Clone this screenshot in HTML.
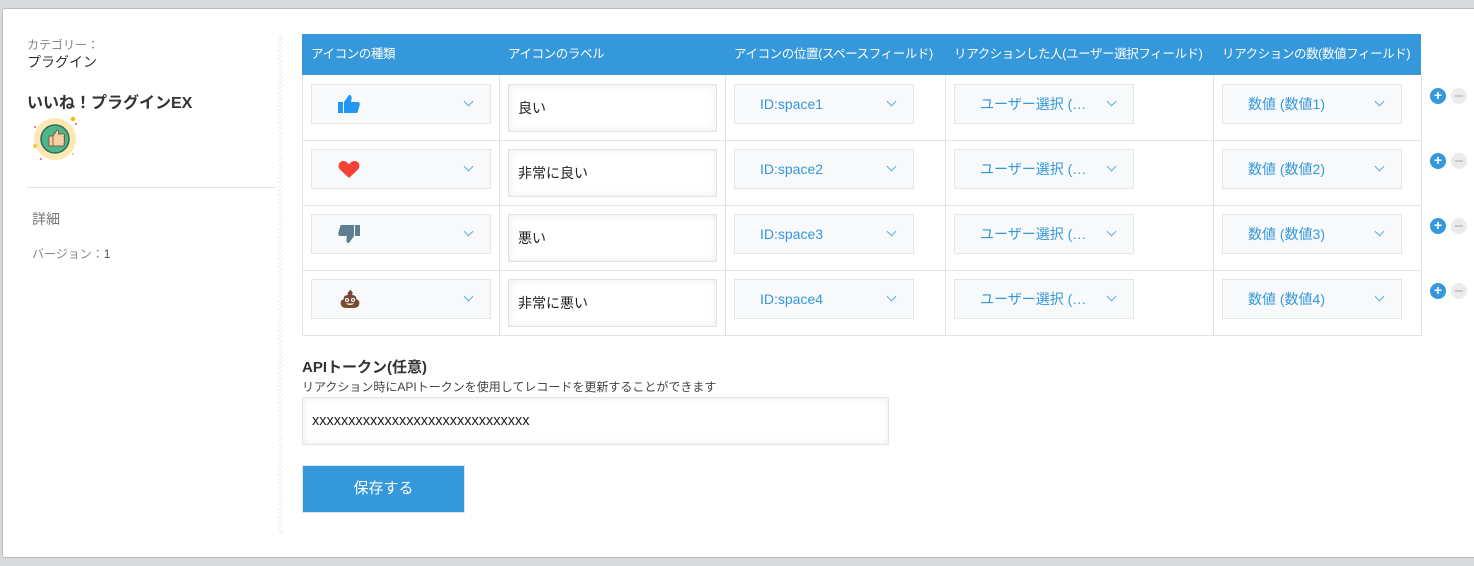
<!DOCTYPE html>
<html><head><meta charset="utf-8"><style>
*{box-sizing:border-box;margin:0;padding:0}
body{width:1474px;height:566px;background:#d9dadb;font-family:"Liberation Sans","Noto Sans CJK JP",sans-serif;position:relative;overflow:hidden}
.card{position:absolute;left:2px;top:8px;width:1480px;height:550px;background:#fff;border:1px solid #bbb;border-right:none;border-radius:3px}
.a{position:absolute}
.th{position:absolute;top:34px;height:41px;background:#3598db;color:#fff;font-size:12.5px;letter-spacing:-0.4px;line-height:41px;padding-left:9px;white-space:nowrap;overflow:hidden}
.vl{position:absolute;width:1px;background:#e3e3e3}
.hl{position:absolute;height:1px;background:#e3e3e3}
.sel{position:absolute;height:40px;background:#f7f9fa;border:1px solid #e3e7e8;color:#3598db;font-size:14px;line-height:38px}
.sel .chev{position:absolute;right:18px;top:13px;width:7px;height:7px;border-right:1px solid #5aaee6;border-bottom:1px solid #5aaee6;transform:rotate(45deg)}
.inp{position:absolute;height:48px;background:#fff;border:1px solid #e3e3e3;box-shadow:inset 0 0 8px rgba(0,0,0,.08);font-size:14px;color:#222;padding-left:9px;line-height:46px}
.plus{position:absolute;width:16px;height:16px;border-radius:50%;background:#3598db;color:#fff;font-size:14px;line-height:15px;text-align:center;font-weight:bold}
.minus{position:absolute;width:16px;height:16px;border-radius:50%;background:#ebebeb}
.minus:after{content:"";position:absolute;left:4px;top:7px;width:8px;height:2px;background:#c8c8c8}
</style></head><body>
<div class="card"></div>
<div class="a" style="left:27px;top:36px;font-size:12px;color:#888">カテゴリー：</div>
<div class="a" style="left:27px;top:52px;font-size:14px;color:#333">プラグイン</div>
<div class="a" style="left:27px;top:89px;font-size:16px;font-weight:bold;color:#333">いいね！プラグインEX</div>
<svg class="a" style="left:30px;top:114px" width="52" height="50" viewBox="0 0 52 50">
<circle cx="25" cy="25" r="21" fill="#fde7b3"/><circle cx="25" cy="25" r="14" fill="#4fb58d" stroke="#2f6b58" stroke-width="1.5"/>
<path d="M19 22h4v10h-4zM23 22l4-6c2 0 2 2 1.5 4h5c1.5 0 1.5 3 0 3 1.5 0 1.5 3 0 3 1.5 0 1.5 3 0 3 1 0 1 3-.5 3H23z" fill="#f7cfa5" stroke="#6b4a2a" stroke-width=".8"/>
<circle cx="43" cy="5" r="2.2" fill="#f5b900"/><circle cx="46" cy="10" r="1" fill="#ee5a6e"/><circle cx="5" cy="13" r="1" fill="#ee5a6e"/><circle cx="5" cy="32" r="2" fill="#f5c842"/><circle cx="11" cy="45" r="1" fill="#ee5a6e"/><circle cx="43" cy="40" r="1" fill="#f5c842"/></svg>
<div class="hl" style="left:27px;top:187px;width:249px"></div>
<div class="a" style="left:32px;top:209px;font-size:14px;color:#777">詳細</div>
<div class="a" style="left:32px;top:245px;font-size:12px;color:#888">バージョン：<span style="color:#555">1</span></div>
<div class="a" style="left:278px;top:34px;width:5px;height:500px;background:repeating-linear-gradient(135deg,#eee 0 1px,#fff 1px 3px)"></div>

<div class="th" style="left:302px;width:197px">アイコンの種類</div>
<div class="th" style="left:499px;width:226px">アイコンのラベル</div>
<div class="th" style="left:725px;width:220px">アイコンの位置(スペースフィールド)</div>
<div class="th" style="left:945px;width:268px">リアクションした人(ユーザー選択フィールド)</div>
<div class="th" style="left:1213px;width:208px">リアクションの数(数値フィールド)</div>

<div class="vl" style="left:302px;top:75px;height:261px"></div>
<div class="vl" style="left:499px;top:75px;height:261px"></div>
<div class="vl" style="left:725px;top:75px;height:261px"></div>
<div class="vl" style="left:945px;top:75px;height:261px"></div>
<div class="vl" style="left:1213px;top:75px;height:261px"></div>
<div class="vl" style="left:1421px;top:75px;height:261px"></div>
<div class="hl" style="left:302px;top:140px;width:1120px"></div>
<div class="hl" style="left:302px;top:205px;width:1120px"></div>
<div class="hl" style="left:302px;top:270px;width:1120px"></div>
<div class="hl" style="left:302px;top:335px;width:1120px"></div>

<div class="sel" style="left:311px;top:84px;width:180px"><svg class="a" style="left:25px;top:9px" width="24" height="20" viewBox="0 0 24 20"><rect x="1" y="8" width="5" height="11" fill="#2196f3"/><path d="M7 8l5-7c2 0 3 1 2.5 4L14 8h7c1.5 0 2 1.5 1.7 3l-2 7c-.3 1-1 1-2 1H7z" fill="#2196f3"/></svg><span class="chev"></span></div>
<div class="sel" style="left:311px;top:149px;width:180px"><svg class="a" style="left:26px;top:10px" width="22" height="19" viewBox="0 0 22 19"><path d="M11 18L2 9.5C-1 6 1 1 5.5 1 8 1 10 3 11 4.5 12 3 14 1 16.5 1 21 1 23 6 20 9.5z" fill="#f44336"/></svg><span class="chev"></span></div>
<div class="sel" style="left:311px;top:214px;width:180px"><svg class="a" style="left:25px;top:9px" width="24" height="20" viewBox="0 0 24 20"><rect x="18" y="1" width="5" height="11" fill="#5e7f8f"/><path d="M17 12l-5 7c-2 0-3-1-2.5-4L10 12H3c-1.5 0-2-1.5-1.7-3l2-7c.3-1 1-1 2-1H17z" fill="#5e7f8f"/></svg><span class="chev"></span></div>
<div class="sel" style="left:311px;top:279px;width:180px"><svg class="a" style="left:27px;top:9px" width="22" height="20" viewBox="0 0 22 20"><path d="M11 1c3 1 3 4 2 5 3 0 5 2 4 4 3 1 4 3 3 6-1 3-4 3-9 3s-8 0-9-3c-1-3 0-5 3-6-1-2 1-4 4-4-1-1 0-3 2-5z" fill="#7a4a32"/><circle cx="8" cy="11" r="2" fill="#fff"/><circle cx="14" cy="11" r="2" fill="#fff"/><circle cx="8" cy="11" r=".9" fill="#333"/><circle cx="14" cy="11" r=".9" fill="#333"/><path d="M6.5 14.5q4.5 3 9 0z" fill="#fff"/></svg><span class="chev"></span></div>

<div class="inp" style="left:508px;top:84px;width:209px">良い</div>
<div class="inp" style="left:508px;top:149px;width:209px">非常に良い</div>
<div class="inp" style="left:508px;top:214px;width:209px">悪い</div>
<div class="inp" style="left:508px;top:279px;width:209px">非常に悪い</div>

<div class="sel" style="left:734px;top:84px;width:180px;padding-left:25px">ID:space1<span class="chev"></span></div>
<div class="sel" style="left:734px;top:149px;width:180px;padding-left:25px">ID:space2<span class="chev"></span></div>
<div class="sel" style="left:734px;top:214px;width:180px;padding-left:25px">ID:space3<span class="chev"></span></div>
<div class="sel" style="left:734px;top:279px;width:180px;padding-left:25px">ID:space4<span class="chev"></span></div>

<div class="sel" style="left:954px;top:84px;width:180px;padding-left:25px">ユーザー選択 (…<span class="chev"></span></div>
<div class="sel" style="left:954px;top:149px;width:180px;padding-left:25px">ユーザー選択 (…<span class="chev"></span></div>
<div class="sel" style="left:954px;top:214px;width:180px;padding-left:25px">ユーザー選択 (…<span class="chev"></span></div>
<div class="sel" style="left:954px;top:279px;width:180px;padding-left:25px">ユーザー選択 (…<span class="chev"></span></div>

<div class="sel" style="left:1222px;top:84px;width:180px;padding-left:25px">数値 (数値1)<span class="chev"></span></div>
<div class="sel" style="left:1222px;top:149px;width:180px;padding-left:25px">数値 (数値2)<span class="chev"></span></div>
<div class="sel" style="left:1222px;top:214px;width:180px;padding-left:25px">数値 (数値3)<span class="chev"></span></div>
<div class="sel" style="left:1222px;top:279px;width:180px;padding-left:25px">数値 (数値4)<span class="chev"></span></div>

<div class="plus" style="left:1430px;top:88px">+</div><div class="minus" style="left:1451px;top:88px"></div>
<div class="plus" style="left:1430px;top:153px">+</div><div class="minus" style="left:1451px;top:153px"></div>
<div class="plus" style="left:1430px;top:218px">+</div><div class="minus" style="left:1451px;top:218px"></div>
<div class="plus" style="left:1430px;top:283px">+</div><div class="minus" style="left:1451px;top:283px"></div>

<div class="a" style="left:302px;top:356px;font-size:15px;font-weight:bold;color:#333">APIトークン(任意)</div>
<div class="a" style="left:302px;top:378px;font-size:12px;color:#444">リアクション時にAPIトークンを使用してレコードを更新することができます</div>
<div class="inp" style="left:302px;top:397px;width:587px;padding-left:9px;font-size:14.5px">xxxxxxxxxxxxxxxxxxxxxxxxxxxxxx</div>
<div class="a" style="left:302px;top:465px;width:163px;height:48px;background:#3598db;border:1px solid #e3e3e3;color:#fff;font-size:15px;text-align:center;line-height:46px">保存する</div>
</body></html>
